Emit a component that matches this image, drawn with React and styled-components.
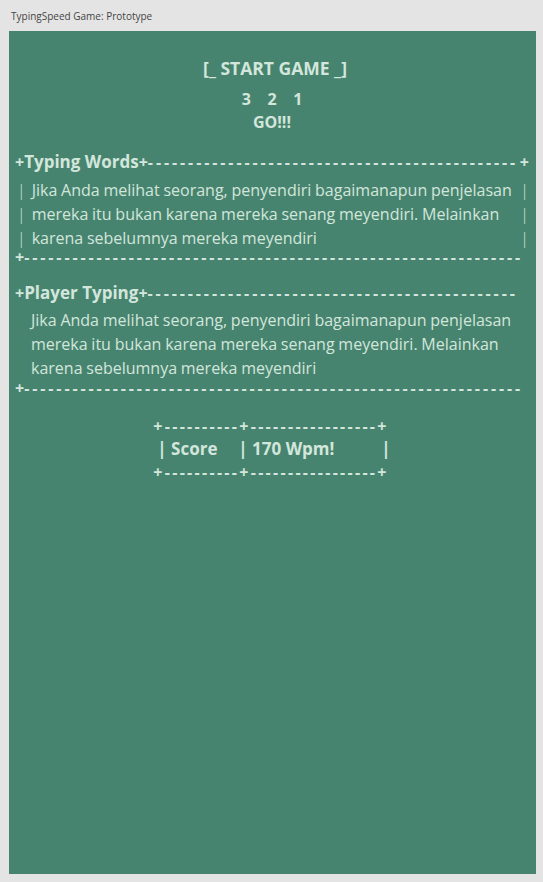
import React from 'react'
import styled, { createGlobalStyle } from 'styled-components'

const GlobalStyle = createGlobalStyle`
  html, body {
    margin: 0;
    padding: 0;
    background: #e4e4e4;
  }
  body {
    font-family: "Open Sans", "Noto Sans", sans-serif;
  }
`

const dashes = n => '-'.repeat(n)
const TEXT = 'Jika Anda melihat seorang, penyendiri bagaimanapun penjelasan mereka itu bukan karena mereka senang meyendiri. Melainkan karena sebelumnya mereka meyendiri'

const App = () => {
  return (
    <Frame>
      <GlobalStyle />
      <WindowTitle>TypingSpeed Game: Prototype</WindowTitle>
      <Panel>
        <StartButton>[_ START GAME _]</StartButton>
        <Countdown>3&nbsp;&nbsp;&nbsp;&nbsp;2&nbsp;&nbsp;&nbsp;&nbsp;1</Countdown>
        <Go>GO!!!</Go>

        <Section $gap={18}>
          <RuleLine $lh={22}>
            <Plus>+</Plus>
            <Label>Typing Words</Label>
            <Plus>+</Plus>
            <Dashes>{dashes(46)}</Dashes>
            <Plus $end>+</Plus>
          </RuleLine>
          <Boxed>
            <Bars>
              <i>|</i><i>|</i><i>|</i>
            </Bars>
            <Paragraph>{TEXT}</Paragraph>
            <Bars>
              <i>|</i><i>|</i><i>|</i>
            </Bars>
          </Boxed>
          <RuleLine $lh={14}>
            <Plus>+</Plus>
            <Dashes>{dashes(62)}</Dashes>
          </RuleLine>
        </Section>

        <Section $gap={18}>
          <RuleLine $lh={22}>
            <Plus>+</Plus>
            <Label>Player Typing</Label>
            <Plus>+</Plus>
            <Dashes>{dashes(46)}</Dashes>
          </RuleLine>
          <Plain>
            <Paragraph>{TEXT}</Paragraph>
          </Plain>
          <RuleLine $lh={14}>
            <Plus>+</Plus>
            <Dashes>{dashes(62)}</Dashes>
          </RuleLine>
        </Section>

        <ScoreTable>
          <TableRule>+----------+-----------------+</TableRule>
          <TableRow>
            <Cell $w={81}>| Score</Cell>
            <Cell $w={143}>| 170 Wpm!</Cell>
            <Cell>|</Cell>
          </TableRow>
          <TableRule>+----------+-----------------+</TableRule>
        </ScoreTable>
      </Panel>
    </Frame>
  )
}

export default App

const Frame = styled.div`
  width: 543px;
  height: 882px;
  display: flex;
  flex-direction: column;
  box-sizing: border-box;
  padding: 0 7px 8px 9px;
`

const WindowTitle = styled.div`
  height: 31px;
  display: flex;
  align-items: center;
  padding-left: 2px;
  font-family: "Open Sans", sans-serif;
  font-size: 10px;
  color: #444;
`

const Panel = styled.div`
  flex: 1;
  min-width: 0;
  background: #47846f;
  color: #d3e6dc;
  display: flex;
  flex-direction: column;
  align-items: center;
  padding: 24px 7px 0 6px;
  overflow: hidden;
`

const StartButton = styled.div`
  font-size: 17.5px;
  font-weight: 700;
  line-height: 26px;
  margin-left: 6px;
`

const Countdown = styled.div`
  margin-top: 6px;
  font-size: 16px;
  font-weight: 700;
  line-height: 24px;
`

const Go = styled.div`
  font-size: 16px;
  font-weight: 700;
  line-height: 22px;
`

const Section = styled.div`
  align-self: stretch;
  min-width: 0;
  margin-top: ${p => p.$gap}px;
  display: flex;
  flex-direction: column;
`

const RuleLine = styled.div`
  display: flex;
  align-items: baseline;
  min-width: 0;
  font-size: 16px;
  font-weight: 700;
  line-height: ${p => p.$lh}px;
  white-space: nowrap;
`

const Plus = styled.span`
  flex: none;
  margin-left: ${p => (p.$end ? 'auto' : '0')};
`

const Label = styled.span`
  flex: none;
  font-size: 17px;
`

const Dashes = styled.span`
  flex: none;
  letter-spacing: 2.9px;
`

const Boxed = styled.div`
  display: flex;
  gap: 6px;
  padding-top: 5px;
  padding-left: 2px;
`

const Plain = styled.div`
  padding: 4px 10px 1px 16px;
`

const Bars = styled.div`
  flex: none;
  display: flex;
  flex-direction: column;
  font-size: 16px;
  font-weight: 300;
  line-height: 24px;
  i {
    font-style: normal;
  }
`

const Paragraph = styled.p`
  margin: 0;
  flex: 1;
  min-width: 0;
  font-size: 16px;
  line-height: 24px;
  word-spacing: -0.4px;
`

const ScoreTable = styled.div`
  margin-top: 20px;
  font-weight: 700;
  font-size: 16px;
`

const TableRule = styled.div`
  line-height: 22px;
  letter-spacing: 2.3px;
`

const TableRow = styled.div`
  display: flex;
  padding-left: 4px;
  line-height: 24px;
  font-size: 17px;
`

const Cell = styled.div`
  width: ${p => (p.$w ? p.$w + 'px' : 'auto')};
`
